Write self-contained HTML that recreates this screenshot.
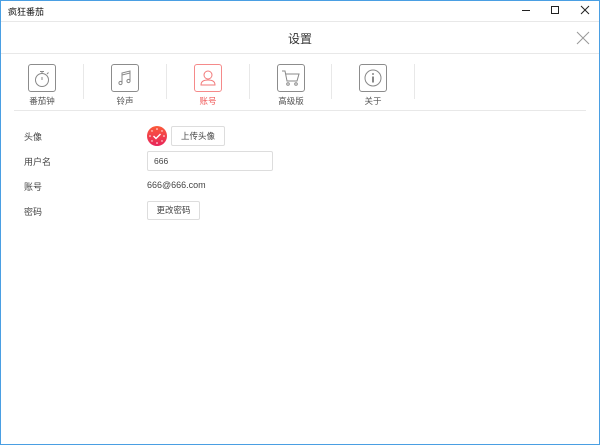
<!DOCTYPE html>
<html><head><meta charset="utf-8"><style>
*{margin:0;padding:0;box-sizing:border-box}
body{width:600px;height:445px;overflow:hidden;background:#fff;font-family:"Liberation Sans","Noto Sans CJK SC",sans-serif;position:relative}
.frame{position:absolute;left:0;top:0;width:600px;height:445px;border:1px solid #4a9fe3;}
.abs{position:absolute}
.t{font-size:9px;color:#444}
.line{position:absolute;height:1px;background:#e8e8e8}
.tab{position:absolute;top:64px;width:28px;height:28px;border:1px solid #8c8c8c;border-radius:3px}
.lab{position:absolute;top:95px;font-size:8.5px;color:#555;width:60px;text-align:center}
.sep{position:absolute;top:64px;width:1px;height:35px;background:#e8e8e8}
.btn{position:absolute;border:1px solid #ddd;border-radius:2px;font-size:8.5px;color:#444;text-align:center;background:#fff}
</style></head><body>
<div class="frame"></div>
<div class="abs t" style="left:8px;top:5px;font-size:9px;color:#111">疯狂番茄</div>
<svg class="abs" style="left:515px;top:0" width="85" height="21"><path d="M7 10.5H15" stroke="#222"/><rect x="36.5" y="6.5" width="7" height="7" fill="none" stroke="#222"/><path d="M66 6L74 14M74 6L66 14" stroke="#222"/></svg>
<div class="line" style="left:1px;top:21px;width:598px"></div>
<div class="abs" style="left:0;width:600px;top:30px;text-align:center;font-size:12px;color:#333">设置</div>
<svg class="abs" style="left:576px;top:31px" width="14" height="14"><path d="M1 1L13 13M13 1L1 13" stroke="#999" stroke-width="1"/></svg>
<div class="line" style="left:1px;top:53px;width:598px"></div>

<div class="tab" style="left:28px"><svg width="26" height="26"><circle cx="13" cy="15" r="6.5" fill="none" stroke="#888"/><path d="M11 6.5H15M13 6.5V8.5M13 12V15M18 9l1.5-1.5" stroke="#888"/></svg></div>
<div class="lab" style="left:12px">番茄钟</div>
<div class="sep" style="left:83px"></div>
<div class="tab" style="left:111px"><svg width="26" height="26"><path d="M10 18V8L18 6V16" fill="none" stroke="#888"/><path d="M10 10L18 8" stroke="#888"/><circle cx="8.5" cy="18" r="1.6" fill="none" stroke="#888"/><circle cx="16.5" cy="16" r="1.6" fill="none" stroke="#888"/></svg></div>
<div class="lab" style="left:95px">铃声</div>
<div class="sep" style="left:166px"></div>
<div class="tab" style="left:194px;border-color:#f58a8a"><svg width="26" height="26"><circle cx="13" cy="10" r="4" fill="none" stroke="#f27a7a"/><path d="M6 20Q6 15 13 15Q20 15 20 20Z" fill="none" stroke="#f27a7a"/></svg></div>
<div class="lab" style="left:178px;color:#f05a5a">账号</div>
<div class="sep" style="left:249px"></div>
<div class="tab" style="left:277px"><svg width="26" height="26"><path d="M4 6H7L9 16H19L21 9H8" fill="none" stroke="#888"/><circle cx="10" cy="19" r="1.3" fill="none" stroke="#888"/><circle cx="18" cy="19" r="1.3" fill="none" stroke="#888"/></svg></div>
<div class="lab" style="left:261px">高级版</div>
<div class="sep" style="left:331px"></div>
<div class="tab" style="left:359px"><svg width="26" height="26"><circle cx="13" cy="13" r="8" fill="none" stroke="#888"/><circle cx="13" cy="9" r="1" fill="#888"/><path d="M13 11.5V17.5" stroke="#888" stroke-width="2"/></svg></div>
<div class="lab" style="left:343px">关于</div>
<div class="sep" style="left:414px"></div>
<div class="line" style="left:14px;top:110px;width:572px"></div>

<div class="abs t" style="left:24px;top:130px">头像</div>
<div class="abs t" style="left:24px;top:155px">用户名</div>
<div class="abs t" style="left:24px;top:180px">账号</div>
<div class="abs t" style="left:24px;top:205px">密码</div>
<svg class="abs" style="left:147px;top:126px" width="20" height="20"><defs><linearGradient id="g" x1="0" y1="0" x2="0" y2="1"><stop offset="0" stop-color="#fb5a3a"/><stop offset="1" stop-color="#e8245a"/></linearGradient></defs><circle cx="10" cy="10" r="10" fill="url(#g)"/><g fill="#fff"><circle cx="10" cy="3" r=".8"/><circle cx="10" cy="17" r=".8"/><circle cx="3" cy="10" r=".8"/><circle cx="17" cy="10" r=".8"/><circle cx="5" cy="5" r=".7"/><circle cx="15" cy="5" r=".7"/><circle cx="5" cy="15" r=".7"/><circle cx="15" cy="15" r=".7"/></g><path d="M6.5 10L9 12.5L13.5 8" fill="none" stroke="#fff" stroke-width="1.4"/></svg>
<div class="btn" style="left:171px;top:126px;width:54px;height:20px;line-height:18px">上传头像</div>
<div class="btn" style="left:147px;top:151px;width:126px;height:20px;line-height:18px;text-align:left;padding-left:6px">666</div>
<div class="abs t" style="left:147px;top:180px">666@666.com</div>
<div class="btn" style="left:147px;top:201px;width:53px;height:19px;line-height:17px">更改密码</div>
</body></html>
